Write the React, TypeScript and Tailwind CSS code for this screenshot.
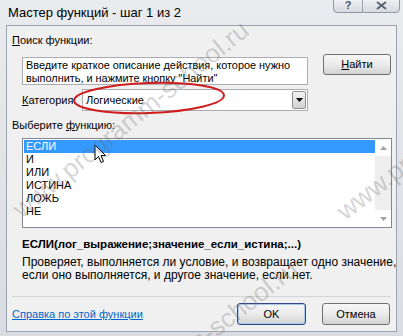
import React from "react";

const font = { fontFamily: '"Liberation Sans", Arial, sans-serif' };

function WinButton({
  children,
  primary,
  className = "",
}: {
  children: React.ReactNode;
  primary?: boolean;
  className?: string;
}) {
  return (
    <div
      className={
        "flex items-center justify-center rounded-[3px] border bg-gradient-to-b from-[#f7f7f7] via-[#ebebeb] to-[#d3d3d3] text-[11px] text-black " +
        (primary ? "border-[#34468a] shadow-[inset_0_0_0_1px_#a9c8e8] " : "border-[#707070] ") +
        className
      }
    >
      {children}
    </div>
  );
}

function Cursor() {
  return (
    <svg
      className="pointer-events-none absolute left-[94px] top-[144px]"
      width="13"
      height="21"
      viewBox="0 0 13 21"
    >
      <path
        d="M1 1 L1 16 L4.5 12.5 L7 18.5 L9.5 17.5 L7 11.5 L11.5 11.5 Z"
        fill="#ffffff"
        stroke="#000000"
        strokeWidth="1"
        strokeLinejoin="round"
      />
    </svg>
  );
}

function Watermark() {
  const cls =
    "pointer-events-none absolute whitespace-nowrap text-[26px] leading-[26px] text-[rgba(110,110,110,0.3)] origin-left";
  return (
    <>
      <div className={cls + " left-[16px] top-[199px] -rotate-[39deg]"} style={font}>
        www.programm-school.ru
      </div>
      <div className={cls + " left-[62px] top-[434px] -rotate-[38deg]"} style={font}>
        www.programm-school.ru
      </div>
      <div className={cls + " left-[340px] top-[201px] -rotate-[38deg]"} style={font}>
        www.programm-school.ru
      </div>
    </>
  );
}

export default function App() {
  const items = ["ЕСЛИ", "И", "ИЛИ", "ИСТИНА", "ЛОЖЬ", "НЕ"];
  return (
    <div
      className="relative h-[336px] w-[403px] overflow-hidden bg-gradient-to-b from-[#e9ebee] to-[#d9dce1] text-[11px] text-black"
      style={font}
    >
      {/* title bar */}
      <div className="relative flex h-[25px] items-center pl-[8px] text-[13px] text-black">
        Мастер функций - шаг 1 из 2
        <div className="absolute right-[3px] top-[-4px] flex h-[17px] w-[67px] overflow-hidden rounded-b-[4px] border border-[#8f98a6] bg-gradient-to-b from-[#f4f5f7] to-[#d6dae0]">
          <div className="flex w-[29px] items-center justify-center border-r border-[#9aa2ad] pt-[2px] text-[11px] font-bold text-[#4a5566]">
            ?
          </div>
          <div className="flex flex-1 items-center justify-center pt-[2px]">
            <svg width="11" height="9" viewBox="0 0 11 9">
              <path d="M1 1 L10 8 M10 1 L1 8" stroke="#5a6474" strokeWidth="2" />
            </svg>
          </div>
        </div>
      </div>

      {/* client */}
      <div className="mx-[6px] h-[307px] border border-[#9ba3ae] bg-[#f0f0f0]">
        <div className="pl-[5px] pt-[8px] leading-[13px]">
          <u>П</u>оиск функции:
        </div>

        <div className="mt-[7px] flex items-start pl-[15px]">
          <div className="mt-[3px] h-[28px] w-[286px] whitespace-nowrap border border-[#abadb3] bg-white px-[3px] pt-[1px] text-[10.9px] leading-[13px]">
            Введите краткое описание действия, которое нужно
            <br />
            выполнить, и нажмите кнопку "Найти"
          </div>
          <WinButton className="ml-[15px] h-[21px] w-[68px]">
            <span>
              <u>Н</u>айти
            </span>
          </WinButton>
        </div>

        <div className="mt-[4px] flex items-center pl-[15px]">
          <div className="w-[60px] leading-[13px]">
            <u>К</u>атегория:
          </div>
          <div className="flex h-[22px] w-[226px] items-stretch border border-[#abadb3] bg-white">
            <div className="flex flex-1 items-center pl-[3px]">Логические</div>
            <div className="m-[1px] flex w-[14px] items-center justify-center rounded-[2px] border border-[#8e8f8f] bg-gradient-to-b from-[#f3f3f3] to-[#d2d2d2]">
              <svg width="7" height="4" viewBox="0 0 7 4">
                <path d="M0 0 L7 0 L3.5 4 Z" fill="#000" />
              </svg>
            </div>
          </div>
        </div>

        <div className="mt-[8px] pl-[5px] leading-[13px]">
          Выберите <u>ф</u>ункцию:
        </div>

        <div className="ml-[15px] mt-[6px] flex h-[90px] w-[370px] border border-[#828790] bg-white">
          <div className="flex-1 pl-[1px] pt-[1px]">
            {items.map((it, i) => (
              <div
                key={it}
                className={
                  "h-[13px] pl-[2px] leading-[13px] " +
                  (i === 0 ? "bg-[#3399ff] text-white" : "text-black")
                }
              >
                {it}
              </div>
            ))}
          </div>
          <div className="flex w-[16px] flex-col">
            <div className="flex h-[17px] items-center justify-center bg-white">
              <svg width="7" height="4" viewBox="0 0 7 4">
                <path d="M0 4 L7 4 L3.5 0 Z" fill="#a3a3a3" />
              </svg>
            </div>
            <div className="flex-1 bg-[#eeeeee]" />
            <div className="flex h-[17px] items-center justify-center bg-white">
              <svg width="7" height="4" viewBox="0 0 7 4">
                <path d="M0 0 L7 0 L3.5 4 Z" fill="#a3a3a3" />
              </svg>
            </div>
          </div>
        </div>

        <div className="mt-[10px] whitespace-nowrap pl-[15px] text-[11.5px] font-bold leading-[13px]">
          ЕСЛИ(лог_выражение;значение_если_истина;...)
        </div>
        <div className="mt-[5px] whitespace-nowrap pl-[15px] text-[12px] leading-[13px]">
          Проверяет, выполняется ли условие, и возвращает одно значение,
          <br />
          если оно выполняется, и другое значение, если нет.
        </div>

        <div className="mx-[5px] mt-[14px] border-t border-[#d5d5d5] border-b-white" />

        <div className="mt-[6px] flex items-center pl-[5px] pr-[6px]">
          <div className="flex-1 pt-[1px] leading-[13px] text-[#0066cc] underline">
            Справка по этой функции
          </div>
          <WinButton primary className="h-[22px] w-[69px]">
            OK
          </WinButton>
          <WinButton className="ml-[16px] h-[22px] w-[68px]">Отмена</WinButton>
        </div>
      </div>

      <svg className="pointer-events-none absolute left-0 top-0" width="403" height="336">
        <ellipse
          cx="149"
          cy="98"
          rx="75"
          ry="15"
          fill="none"
          stroke="#d01c1c"
          strokeWidth="2"
          transform="rotate(-2 149 98)"
        />
      </svg>
      <Cursor />
      <Watermark />
    </div>
  );
}
